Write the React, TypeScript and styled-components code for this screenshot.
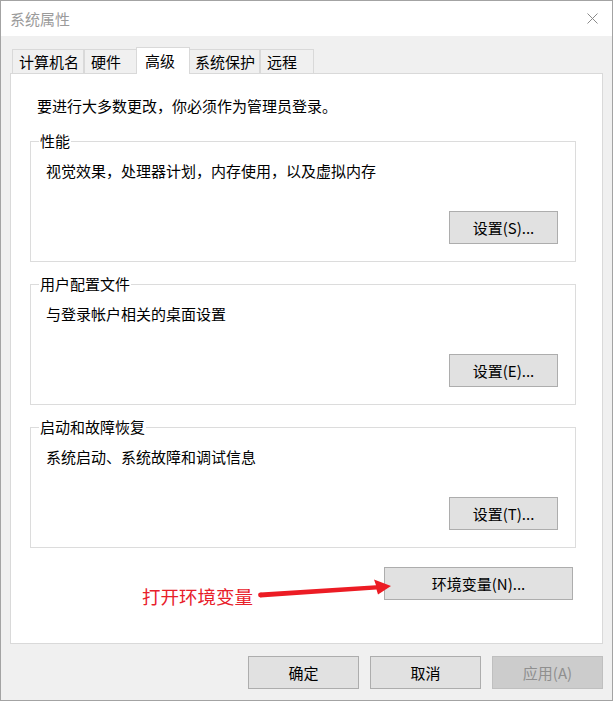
import styled, { createGlobalStyle } from 'styled-components'

const GlobalStyle = createGlobalStyle`
  html, body {
    margin: 0;
    padding: 0;
    background: #f0f0f0;
  }
  * {
    box-sizing: border-box;
  }
`

const FONT = `'Noto Sans CJK SC', 'Noto Sans', sans-serif`

const Window = styled.div`
  position: relative;
  width: 613px;
  height: 701px;
  border: 1px solid #a3a3a3;
  background: #f0f0f0;
  display: flex;
  flex-direction: column;
  font-family: ${FONT};
  font-size: 15px;
  color: #000;
`

const TitleBar = styled.div`
  height: 35px;
  flex: none;
  background: #fff;
  display: flex;
  align-items: center;
  justify-content: space-between;
  padding: 0 14px 0 9px;
`

const TitleText = styled.span`
  color: #9b9b9b;
  font-size: 15px;
  line-height: 20px;
`

const Body = styled.div`
  flex: 1;
  display: flex;
  flex-direction: column;
  padding: 11px 9px 11px 9px;
  min-height: 0;
`

const TabStrip = styled.div`
  height: 26px;
  flex: none;
  display: flex;
  align-items: flex-end;
  padding-left: 2px;
  position: relative;
  z-index: 1;
`

const Tab = styled.div<{ $active?: boolean }>`
  min-width: 54px;
  height: ${({ $active }) => ($active ? '27px' : '24px')};
  line-height: ${({ $active }) => ($active ? '26px' : '23px')};
  padding: 0 4px 0 ${({ $active }) => ($active ? '8px' : '6px')};
  margin: ${({ $active }) => ($active ? '0 -2px -1px -2px' : '0')};
  border: 1px solid #d9d9d9;
  border-bottom: none;
  background: ${({ $active }) => ($active ? '#fff' : '#f0f0f0')};
  position: relative;
  z-index: ${({ $active }) => ($active ? 2 : 0)};
  white-space: nowrap;
  & + & {
    border-left: ${({ $active }) => ($active ? '1px solid #d9d9d9' : 'none')};
  }
`

const Panel = styled.div`
  flex: 1;
  background: #fff;
  border: 1px solid #d9d9d9;
  padding: 22px 26px 0 19px;
  display: flex;
  flex-direction: column;
`

const Intro = styled.div`
  line-height: 20px;
  padding-left: 7px;
`

const Group = styled.fieldset`
  margin: 12px 0 0 0;
  padding: 0;
  border: 1px solid #dcdcdc;
  min-width: 0;
  &:first-of-type {
    margin-top: 15px;
  }
`

const Legend = styled.legend`
  margin-left: 8px;
  padding: 0 1px;
  line-height: 20px;
`

const GroupInner = styled.div`
  padding: 10px 17px 17px 15px;
  display: flex;
  flex-direction: column;
`

const Desc = styled.div`
  line-height: 20px;
`

const ButtonRow = styled.div<{ $top?: number; $right?: number }>`
  display: flex;
  justify-content: flex-end;
  margin-top: ${({ $top = 0 }) => $top}px;
  padding-right: ${({ $right = 0 }) => $right}px;
  gap: 11px;
`

const Button = styled.button<{ $width: number; $disabled?: boolean }>`
  width: ${({ $width }) => $width}px;
  height: 33px;
  margin: 0;
  padding: 0;
  font-family: ${FONT};
  font-size: 15px;
  line-height: 20px;
  color: ${({ $disabled }) => ($disabled ? '#8f8f8f' : '#000')};
  background: ${({ $disabled }) => ($disabled ? '#cccccc' : '#e1e1e1')};
  border: 1px solid ${({ $disabled }) => ($disabled ? '#bfbfbf' : '#adadad')};
  border-radius: 0;
`

const Footer = styled.div`
  flex: none;
  margin-top: 12px;
  display: flex;
  justify-content: flex-end;
  gap: 11px;
`

const Note = styled.div`
  position: absolute;
  left: 141px;
  top: 582px;
  color: #e8202a;
  font-size: 18.5px;
  line-height: 26px;
  white-space: nowrap;
`

const Arrow = styled.svg`
  position: absolute;
  left: 255px;
  top: 572px;
`

const CloseIcon = () => (
  <svg width='11' height='11' viewBox='0 0 11 11'>
    <path d='M0.5 0.5 L10.5 10.5 M10.5 0.5 L0.5 10.5' stroke='#8a8a8a' strokeWidth='1' />
  </svg>
)

const tabs = ['计算机名', '硬件', '高级', '系统保护', '远程']

const groups = [
  { title: '性能', desc: '视觉效果，处理器计划，内存使用，以及虚拟内存', action: '设置(S)...' },
  { title: '用户配置文件', desc: '与登录帐户相关的桌面设置', action: '设置(E)...' },
  { title: '启动和故障恢复', desc: '系统启动、系统故障和调试信息', action: '设置(T)...' },
]

export default function App() {
  return (
    <>
      <GlobalStyle />
      <Window>
        <TitleBar>
          <TitleText>系统属性</TitleText>
          <CloseIcon />
        </TitleBar>
        <Body>
          <TabStrip>
            {tabs.map((t) => (
              <Tab key={t} $active={t === '高级'}>
                {t}
              </Tab>
            ))}
          </TabStrip>
          <Panel>
            <Intro>要进行大多数更改，你必须作为管理员登录。</Intro>
            {groups.map((g) => (
              <Group key={g.title}>
                <Legend>{g.title}</Legend>
                <GroupInner>
                  <Desc>{g.desc}</Desc>
                  <ButtonRow $top={30}>
                    <Button $width={109}>{g.action}</Button>
                  </ButtonRow>
                </GroupInner>
              </Group>
            ))}
            <ButtonRow $top={19} $right={3}>
              <Button $width={189}>环境变量(N)...</Button>
            </ButtonRow>
          </Panel>
          <Footer>
            <Button $width={111}>确定</Button>
            <Button $width={111}>取消</Button>
            <Button $width={111} $disabled>
              应用(A)
            </Button>
          </Footer>
        </Body>
        <Note>打开环境变量</Note>
        <Arrow width='140' height='28' viewBox='0 0 140 28'>
          <circle cx='4.5' cy='22' r='2.4' fill='#ec1c24' />
          <polygon points='4.5,19.6 120,12.2 118,6.5 135,13 122,21.5 120.5,16.6 4.5,24.4' fill='#ec1c24' />
        </Arrow>
      </Window>
    </>
  )
}
